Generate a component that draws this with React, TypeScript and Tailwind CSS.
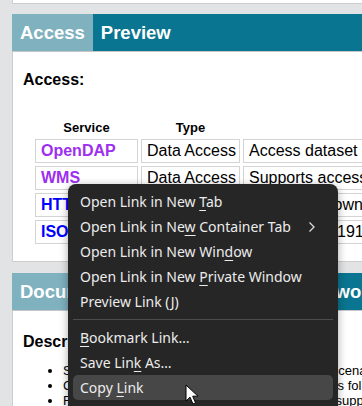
import React from 'react'

const rows = [
  { name: 'OpenDAP', visited: true, type: 'Data Access', desc: 'Access dataset using OPeNDAP' },
  { name: 'WMS', visited: true, type: 'Data Access', desc: 'Supports access via WMS' },
  { name: 'HTTPServer', visited: false, type: 'Data Access', desc: 'Allows file download' },
  { name: 'ISO', visited: false, type: 'Metadata', desc: 'Metadata in 19115-2 format' },
]

function Cell({ children, className = '' }: { children: React.ReactNode; className?: string }) {
  return (
    <div className={`h-[24px] border border-[#d4d4d4] pl-[5px] text-[16px] leading-[22px] whitespace-nowrap overflow-hidden ${className}`}>
      {children}
    </div>
  )
}

function MenuItem({ children, active = false, sub = false }: { children: React.ReactNode; active?: boolean; sub?: boolean }) {
  return (
    <div className={`h-[25px] flex items-center pl-[7px] pr-[12px] rounded-[5px] ${active ? 'bg-[#474747]' : ''}`}>
      <span className="flex-1 whitespace-nowrap">{children}</span>
      {sub && (
        <svg width="8" height="12" viewBox="0 0 8 12" className="mr-[5px]">
          <path d="M1.5 1.5 L6 6 L1.5 10.5" fill="none" stroke="#dcdcdc" strokeWidth="1.3" />
        </svg>
      )}
    </div>
  )
}

const U = ({ children }: { children: React.ReactNode }) => (
  <span className="underline underline-offset-[3px] decoration-1">{children}</span>
)

export default function App() {
  return (
    <div className="relative h-[406px] w-[362px] overflow-hidden bg-[#e2e3e5] pl-[12px] font-['Liberation_Sans',Arial,sans-serif] text-black">
      {/* previous panel */}
      <div className="h-[4px] bg-white border-b border-l border-[#cdcdcd]" />

      {/* access panel */}
      <div className="mt-[10px]">
        <div className="flex h-[37px] bg-[#0a7590] text-white text-[18.5px] font-bold leading-[37px] border-b border-[#c6c6c6] box-content">
          <div className="bg-[#80b1bf] px-[8px]">Access</div>
          <div className="px-[8px]">Preview</div>
        </div>
        <div className="bg-white border-l border-b border-[#cdcdcd] pl-[10px] pt-[19px] pb-[17px]">
          <div className="text-[16px] font-bold leading-[18px]">Access:</div>
          <div className="mt-[31px] ml-[12px] grid grid-cols-[103px_99px_240px] gap-[3px]">
            <div className="h-[16px] text-center text-[13px] font-bold leading-[16px]">Service</div>
            <div className="h-[16px] text-center text-[13px] font-bold leading-[16px]">Type</div>
            <div className="h-[16px]" />
            {rows.map((r) => (
              <React.Fragment key={r.name}>
                <Cell className={`font-bold ${r.visited ? 'text-[#9d2ff0]' : 'text-[#0000ff]'}`}>{r.name}</Cell>
                <Cell>{r.type}</Cell>
                <Cell>{r.desc}</Cell>
              </React.Fragment>
            ))}
          </div>
        </div>
      </div>

      {/* documentation panel */}
      <div className="mt-[11px]">
        <div className="flex h-[37px] bg-[#0a7590] text-white text-[18.5px] font-bold leading-[37px] border-b border-[#c6c6c6] box-content whitespace-nowrap">
          <div className="bg-[#80b1bf] px-[8px] shrink-0">Documentation</div>
          <div className="px-[8px] w-[131px] shrink-0">Metadata</div>
          <div className="px-[8px] shrink-0">Keywords</div>
        </div>
        <div className="bg-white border-l border-[#cdcdcd] pl-[10px] pt-[22px] h-[200px]">
          <div className="text-[16px] font-bold leading-[18px]">Description:</div>
          <ul className="mt-[12px] list-disc pl-[40px] text-[13px] leading-[15px] whitespace-nowrap">
            <li>Supports the analysis for a multiple use-cases scenario</li>
            <li>Can be combined with all other open datasets as follows</li>
            <li>Further services and tools are also available to support</li>
          </ul>
        </div>
      </div>

      {/* context menu */}
      <div className="absolute left-[68px] top-[184px] w-[270px] h-[240px] rounded-[8px] bg-[#262626] p-[5px] text-[14px] text-[#ececec] font-['Noto_Sans',sans-serif] shadow-[0_2px_8px_rgba(0,0,0,0.35)]">
        <MenuItem>Open Link in New <U>T</U>ab</MenuItem>
        <MenuItem sub>Open Link in Ne<U>w</U> Container Tab</MenuItem>
        <MenuItem>Open Link in New Win<U>d</U>ow</MenuItem>
        <MenuItem>Open Link in New <U>P</U>rivate Window</MenuItem>
        <MenuItem>Preview Link (J)</MenuItem>
        <div className="h-[11px] flex items-center">
          <div className="h-px w-full bg-[#4c4c4c]" />
        </div>
        <MenuItem><U>B</U>ookmark Link…</MenuItem>
        <MenuItem>Save Lin<U>k</U> As…</MenuItem>
        <MenuItem active>Copy <U>L</U>ink</MenuItem>
      </div>

      {/* mouse cursor */}
      <svg className="absolute left-[185px] top-[384px]" width="14" height="22" viewBox="0 0 14 22">
        <path d="M1 1 L1 17 L5 13.2 L8 20 L10.6 18.9 L7.7 12.2 L13 12.2 Z" fill="#ffffff" stroke="#000000" strokeWidth="1" strokeLinejoin="round" />
      </svg>
    </div>
  )
}
